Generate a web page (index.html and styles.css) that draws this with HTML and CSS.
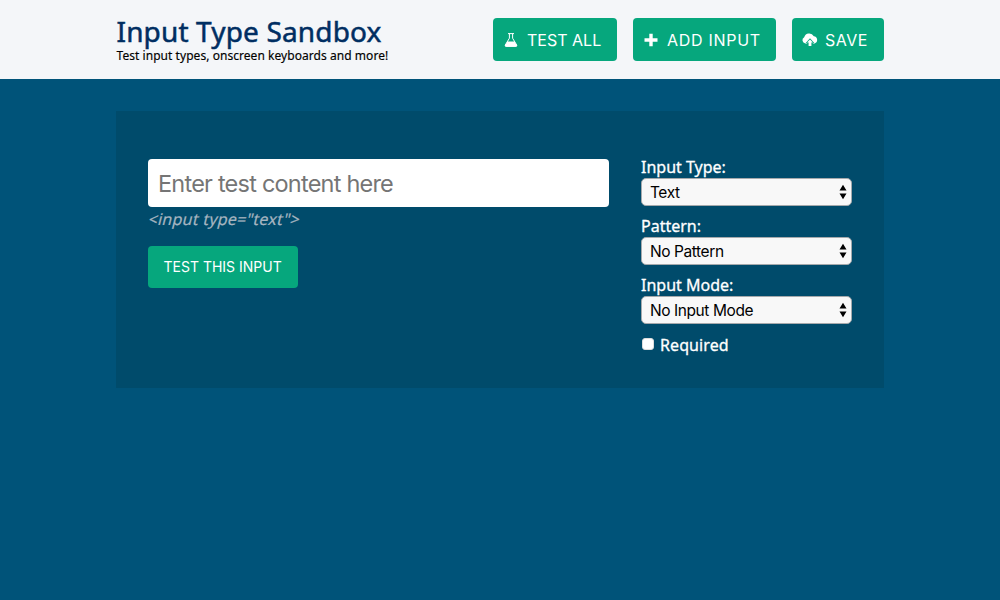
FILE: index.html
```html
<!DOCTYPE html>
<html lang="en">
<head>
<meta charset="utf-8">
<title>Input Type Sandbox</title>
<link rel="stylesheet" href="styles.css">
</head>
<body>
<header class="header">
  <div class="brand">
    <h1 class="title">Input Type Sandbox</h1>
    <p class="tagline">Test input types, onscreen keyboards and more!</p>
  </div>
  <nav class="actions">
    <button class="btn btn-all" type="button">
      <svg class="icon" width="14" height="16" viewBox="0 0 14 16"><path d="M4 1.600h6M5.400 1.800v4.400L1.300 13q-.5 1.300.8 1.300h9.800q1.300 0 .8-1.300L8.600 6.200v-4.400" fill="none" stroke="#fff" stroke-width="1"/><path d="M3.500 9.600h7l2.600 3.800-.8 1.400H1.700L.9 13.400z" fill="#fff"/></svg>
      <span class="t-all">TEST ALL</span>
    </button>
    <button class="btn btn-add" type="button">
      <svg class="icon" width="14" height="16" viewBox="0 0 14 16"><path d="M5.300 1.700h3.400v4.600H13.500v3.400H8.700v4.600H5.300V9.700H.5V6.300h4.800z" fill="#fff"/></svg>
      <span class="t-add">ADD INPUT</span>
    </button>
    <button class="btn btn-save" type="button">
      <svg class="icon" width="16" height="16" viewBox="0 0 16 16"><path d="M3.400 11.400A3.300 3.300 0 0 1 2.200 5.200 5.300 5.300 0 0 1 11.800 4.200 3.700 3.700 0 0 1 12.600 11.400H10.800V10.900h1.500L8 6.300l-4.300 4.600h1.500v.5z" fill="#fff"/><path d="M8 7.400l2.900 3H9.400v3.600H6.600v-3.600H5.100z" fill="#fff"/></svg>
      <span class="t-save">SAVE</span>
    </button>
  </nav>
</header>
<main class="card">
  <section class="tester">
    <input class="field" type="text" placeholder="Enter test content here">
    <em class="code">&lt;input type="text"&gt;</em>
    <button class="btn-test" type="button"><span>TEST THIS INPUT</span></button>
  </section>
  <section class="options">
    <div class="option">
      <div class="label l-type">Input Type:</div>
      <div class="select"><span class="value">Text</span><svg width="8" height="16" viewBox="0 0 8 16"><path d="M4 .8L7.500 6.500H.5zM4 15.200L7.500 9.500H.5z"/></svg></div>
    </div>
    <div class="option">
      <div class="label l-pattern">Pattern:</div>
      <div class="select"><span class="value">No Pattern</span><svg width="8" height="16" viewBox="0 0 8 16"><path d="M4 .8L7.500 6.500H.5zM4 15.200L7.500 9.500H.5z"/></svg></div>
    </div>
    <div class="option">
      <div class="label l-mode">Input Mode:</div>
      <div class="select"><span class="value">No Input Mode</span><svg width="8" height="16" viewBox="0 0 8 16"><path d="M4 .8L7.500 6.500H.5zM4 15.200L7.500 9.500H.5z"/></svg></div>
    </div>
    <label class="required"><input class="check" type="checkbox"><span class="label l-req">Required</span></label>
  </section>
</main>
</body>
</html>
```
FILE: styles.css
```css
* { box-sizing: border-box; }
body { margin: 0; min-height: 600px; background: #005379; font-family: "Noto Sans", sans-serif; }
.header { height: 79px; padding: 0 116px; background: #f4f6f9; display: flex; justify-content: space-between; }
.brand { padding: 14px 0 0 .5px; white-space: nowrap; }
.title { margin: 0; font-size: 28px; line-height: 34px; font-weight: 400; letter-spacing: .15px; color: #002e62; -webkit-text-stroke: .5px #002e62; }
.tagline { margin: 0; font-size: 12px; line-height: 16px; letter-spacing: .05px; color: #000; -webkit-text-stroke: .15px #000; }
.actions { display: flex; gap: 16px; padding-top: 18px; }
.btn { height: 43px; border: 0; border-radius: 4px; background: #06a77d; color: #fff; display: flex; align-items: center; padding: 0 0 0 11px; font: 16px/20px Inter, sans-serif; white-space: nowrap; }
.btn .icon { flex: none; margin-right: 9px; }
.btn-all { width: 124px; }
.btn-add { width: 143px; letter-spacing: .72px; }
.btn-save { width: 92px; padding-left: 10px; letter-spacing: .5px; }
.btn-save .icon { margin-right: 7px; }
.card { width: 768px; height: 277px; margin: 32px auto 0; padding: 48px 32px 0; background: #004b6b; display: flex; gap: 32px; }
.tester { width: 461px; display: flex; flex-direction: column; align-items: flex-start; }
.field { width: 461px; height: 48px; border: 0; border-radius: 4px; padding: 1px 10px 0; background: #fff; font: 23.5px Inter, sans-serif; letter-spacing: -.78px; }
.field::placeholder { color: #757575; opacity: 1; }
.code { font-size: 16px; line-height: 22px; margin: 1px 0 0 1px; color: #a6b5c0; white-space: nowrap; font-style: normal; transform: skewX(-14deg); letter-spacing: .27px; -webkit-text-stroke: .2px #a6b5c0; }
.btn-test { width: 150px; height: 42px; margin-top: 16px; border: 0; border-radius: 4px; padding: 0 0 0 15.5px; background: #06a77d; color: #fff; font: 14px/20px Inter, sans-serif; text-align: left; white-space: nowrap; }
.options { width: 211px; }
.option { height: 59px; }
.label { font-size: 16px; line-height: 17px; padding-bottom: 2px; color: #fff; white-space: nowrap; -webkit-text-stroke: .3px #fff; }
.select { height: 28px; border: 1px solid #a5a9ac; border-radius: 5px; background: #f8f8f8; color: #000; display: flex; justify-content: space-between; align-items: center; padding: 0 4px 0 8px; font: 15.5px/20px Inter, sans-serif; letter-spacing: -.42px; white-space: nowrap; }
.value { padding-top: 2px; }
.required { display: flex; align-items: center; height: 19px; }
.l-req { padding: 0; letter-spacing: .1px; }
.check { appearance: none; width: 12px; height: 12px; margin: 0 6px 3px 1px; border-radius: 3px; background: #fff; border: 1px solid #ddd; }
```
